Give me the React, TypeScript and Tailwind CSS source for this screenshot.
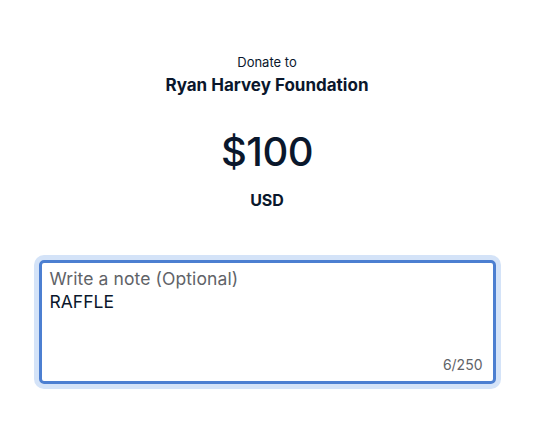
import React from "react";

export default function App() {
  return (
    <div
      className="w-[534px] h-[444px] bg-white flex flex-col items-center text-[#0a172c]"
      style={{ fontFamily: "Inter, 'Noto Sans', sans-serif" }}
    >
      <div className="mt-[54px] text-[13px] leading-[16px]">Donate to</div>
      <div className="mt-[4px] text-[17px] leading-[22px] font-bold">Ryan Harvey Foundation</div>
      <div className="mt-[32px] text-[40px] leading-[48px] font-medium tracking-[-0.5px]">$100</div>
      <div className="mt-[14px] text-[16px] leading-[20px] font-bold">USD</div>
      <div className="mt-[50px] w-[457px] h-[124px] rounded-[5px] border-[3px] border-[#4c7fd1] ring-[5px] ring-[#d4e3f8] flex flex-col pl-[8px] pr-[7px] pt-[5px] pb-[8px]">
        <div className="text-[17.5px] leading-[22px] text-[#5f6368] tracking-[0.1px]">Write a note (Optional)</div>
        <div className="mt-[1px] text-[17.5px] leading-[22px] text-[#0a172c]">RAFFLE</div>
        <div className="mt-auto self-end text-[14px] leading-[17px] text-[#5f6368] mr-[3px]">6/250</div>
      </div>
    </div>
  );
}
